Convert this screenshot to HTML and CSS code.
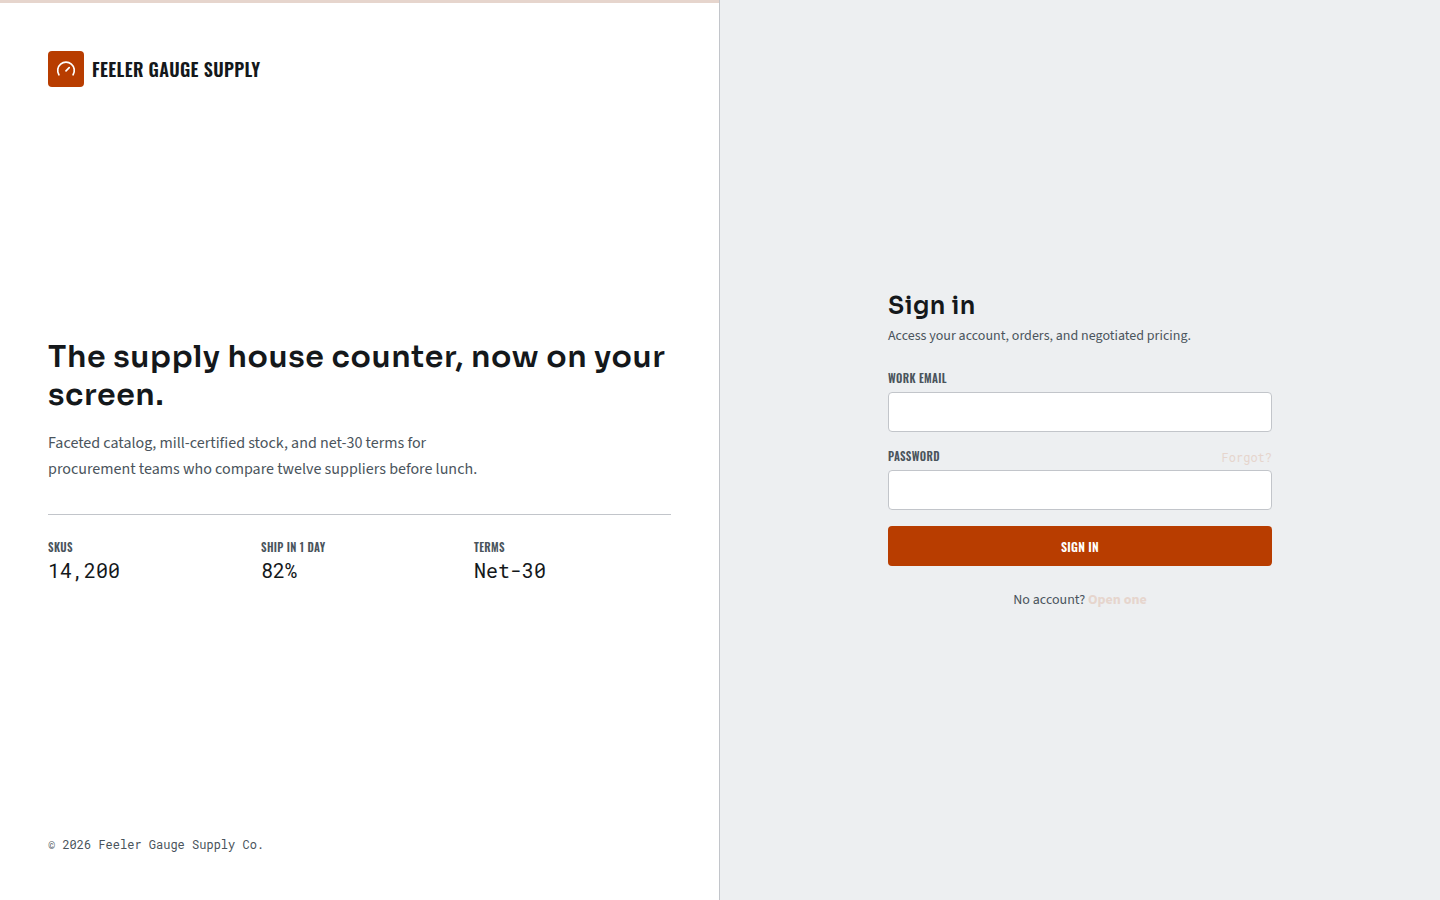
FILE: index.html
```html
<!DOCTYPE html>
<html lang="en">
<head>
  <meta charset="UTF-8">
  <meta name="viewport" content="width=device-width, initial-scale=1.0">
  <title>Sign in - Feeler Gauge Supply</title>
  <link rel="stylesheet" href="styles.css">
</head>
<body>
  <div class="page">
    <section class="brand-panel">
      <div class="brand">
        <span class="brand-mark">
          <svg width="20" height="20" viewBox="0 0 20 20" fill="none" stroke="currentColor" stroke-width="1.7" stroke-linecap="round" aria-hidden="true">
            <path d="M2.9 15.8A8.3 8.3 0 1 1 17.1 15.8"/>
            <path d="M10 11.8l3.2-3.2"/>
          </svg>
        </span>
        <span class="brand-name">Feeler Gauge Supply</span>
      </div>

      <div class="pitch">
        <h1>The supply house counter, now on your screen.</h1>
        <p class="lead">Faceted catalog, mill-certified stock, and net-30 terms for procurement teams who compare twelve suppliers before lunch.</p>
        <dl class="stats">
          <div>
            <dt class="caps">SKUs</dt>
            <dd>14,200</dd>
          </div>
          <div>
            <dt class="caps">Ship in 1 day</dt>
            <dd>82%</dd>
          </div>
          <div>
            <dt class="caps">Terms</dt>
            <dd>Net-30</dd>
          </div>
        </dl>
      </div>

      <footer class="copyright">© 2026 Feeler Gauge Supply Co.</footer>
    </section>

    <main class="form-panel">
      <form class="signin">
        <h2>Sign in</h2>
        <p class="sub">Access your account, orders, and negotiated pricing.</p>

        <div class="field">
          <div class="field-head">
            <label class="caps" for="email">Work email</label>
          </div>
          <input type="email" id="email" name="email" required>
        </div>

        <div class="field">
          <div class="field-head">
            <label class="caps" for="password">Password</label>
            <a class="forgot" href="#">Forgot?</a>
          </div>
          <input type="password" id="password" name="password" required>
        </div>

        <button type="submit">Sign in</button>
        <p class="signup">No account? <a href="#">Open one</a></p>
      </form>
    </main>
  </div>
</body>
</html>
```
FILE: styles.css
```css
:root {
  --ink: #14181b;
  --muted: #4a545c;
  --line: #c2c5ca;
  --accent: #b83d00;
  --blush: #e6d5cd;
  --font-body: "Source Sans 3", "Noto Sans CJK SC", sans-serif;
  --font-head: "Sora", "Inter", sans-serif;
  --font-caps: "Oswald", "Liberation Sans Narrow", sans-serif;
  --font-mono: "Roboto Mono", "Liberation Mono", monospace;
}
* {
  box-sizing: border-box;
}
body {
  margin: 0;
  font-family: var(--font-body);
  font-size: 14px;
  color: var(--ink);
  background: #edeff1;
}
h1, h2, p, dl, dd {
  margin: 0;
}
a {
  color: var(--blush);
  text-decoration: none;
}
.page {
  display: grid;
  grid-template-columns: 1fr 1fr;
  min-height: 100vh;
}
.brand-panel {
  display: flex;
  flex-direction: column;
  justify-content: space-between;
  padding: 51px 48px 48px;
  background: linear-gradient(var(--blush), var(--blush)) top / 100% 3px no-repeat #fff;
  border-right: 1px solid var(--line);
}
.brand {
  display: flex;
  align-items: center;
  gap: 8px;
}
.brand-mark {
  display: flex;
  align-items: center;
  justify-content: center;
  width: 36px;
  height: 36px;
  border-radius: 4px;
  background: var(--accent);
  color: #fff;
}
.brand-name {
  font-family: var(--font-caps);
  font-size: 18px;
  font-weight: 600;
  letter-spacing: 0.02em;
  text-transform: uppercase;
}
h1, h2 {
  font-family: var(--font-head);
  font-weight: 600;
  letter-spacing: 0.02em;
}
h1 {
  font-size: 30px;
  line-height: 1.25;
}
.lead {
  max-width: 448px;
  margin-top: 16px;
  font-size: 16px;
  line-height: 26px;
  color: var(--muted);
}
.stats {
  display: grid;
  grid-template-columns: repeat(3, 1fr);
  gap: 16px;
  margin-top: 32px;
  padding-top: 24px;
  border-top: 1px solid var(--line);
}
.stats dd {
  font-family: var(--font-mono);
  font-size: 20px;
  line-height: 28px;
}
.caps {
  font-family: var(--font-caps);
  font-size: 11px;
  font-weight: 600;
  line-height: 17px;
  letter-spacing: 0.03em;
  text-transform: uppercase;
  color: var(--muted);
}
.copyright {
  font-family: var(--font-mono);
  font-size: 12px;
  line-height: 16px;
  color: var(--muted);
}
.form-panel {
  display: flex;
  align-items: center;
  justify-content: center;
  padding: 48px;
}
.signin {
  width: 100%;
  max-width: 384px;
}
h2 {
  font-size: 24px;
  line-height: 32px;
}
.sub {
  margin: 4px 0 24px;
  line-height: 20px;
  color: var(--muted);
}
.field {
  margin-bottom: 16px;
}
.field-head {
  display: flex;
  justify-content: space-between;
  height: 17px;
  margin-bottom: 5px;
}
.forgot {
  font-family: var(--font-mono);
  font-size: 12px;
  line-height: 18px;
}
input {
  display: block;
  width: 100%;
  height: 40px;
  padding: 0 12px;
  border: 1px solid var(--line);
  border-radius: 4px;
  background: #fff;
  font-family: var(--font-body);
  font-size: 14px;
}
button {
  display: block;
  width: 100%;
  height: 40px;
  border: none;
  border-radius: 4px;
  background: var(--accent);
  color: #fff;
  font-family: var(--font-caps);
  font-size: 12px;
  font-weight: 600;
  letter-spacing: 0.02em;
  text-transform: uppercase;
  cursor: pointer;
}
.signup {
  margin-top: 24px;
  line-height: 20px;
  text-align: center;
  color: var(--muted);
}
.signup a {
  font-weight: 700;
}
```
